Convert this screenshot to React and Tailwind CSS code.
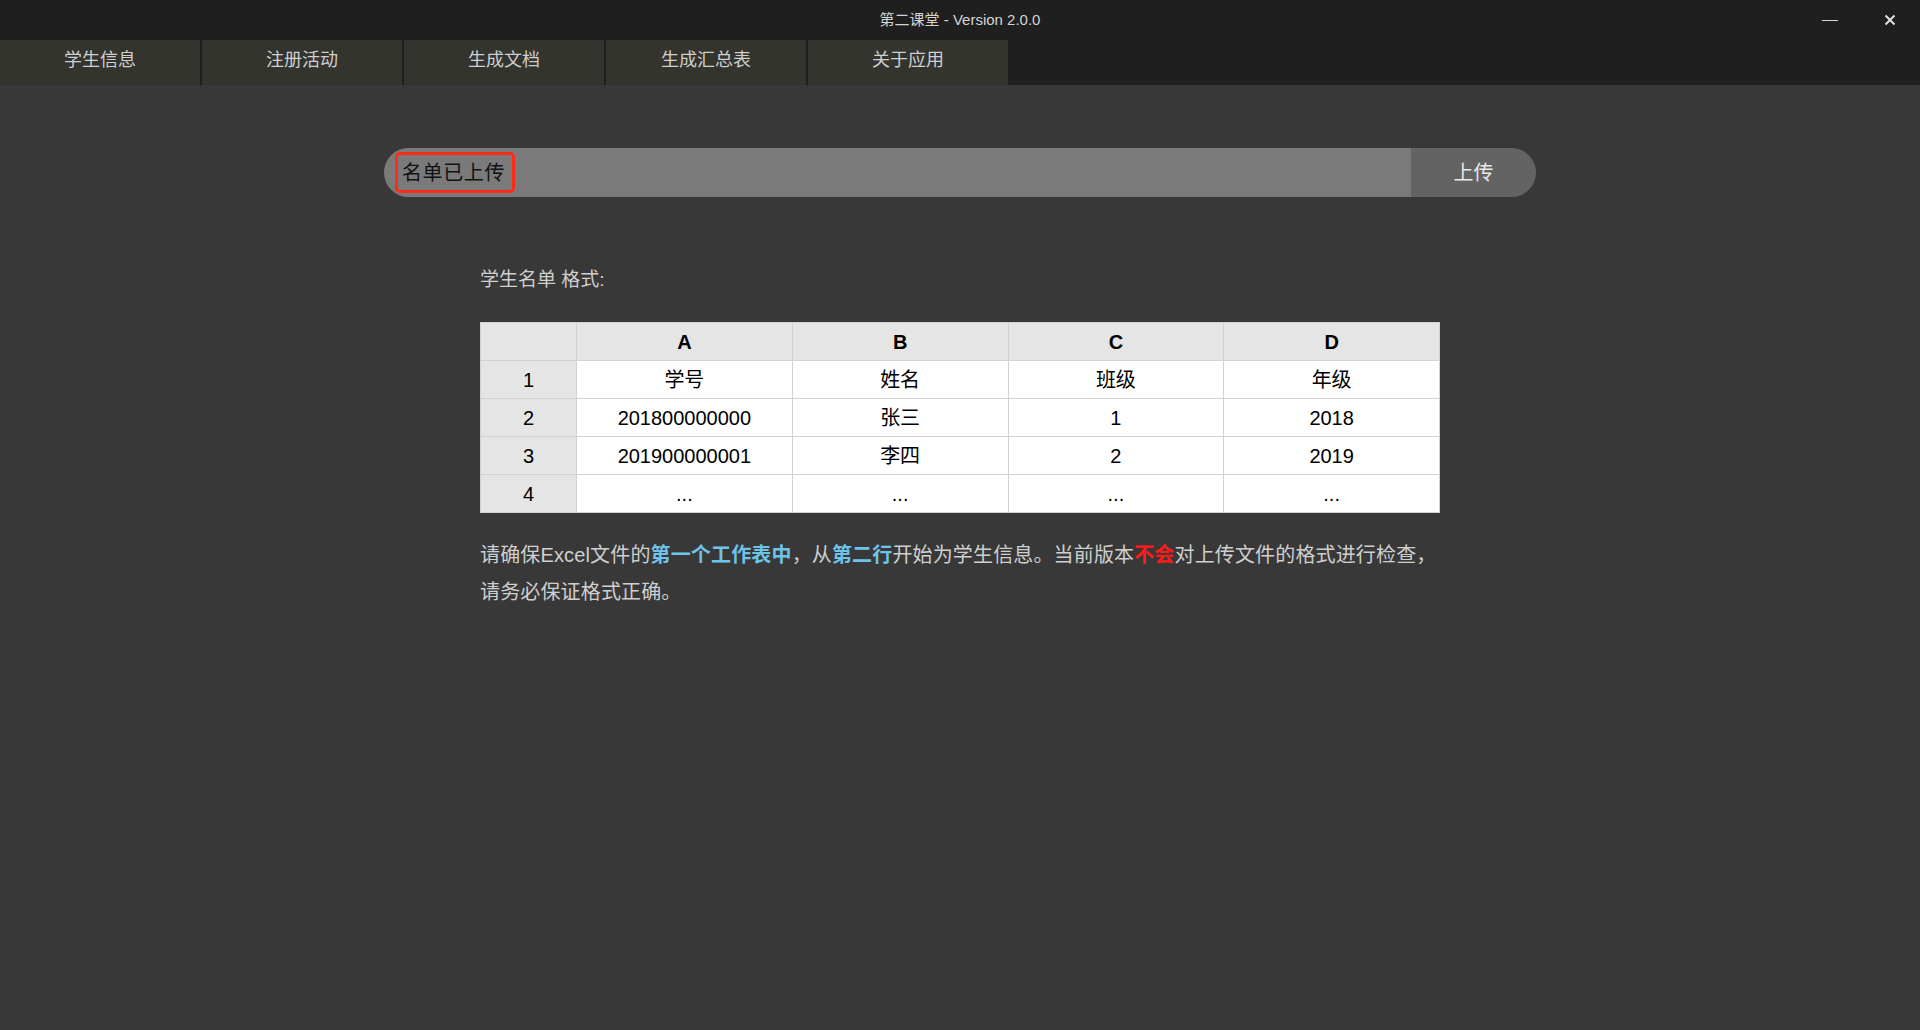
import { useState } from "react";

const FONT = { fontFamily: '"Liberation Sans", "Noto Sans CJK SC", sans-serif' };

const TABS = ["学生信息", "注册活动", "生成文档", "生成汇总表", "关于应用"];

const ROWS = [
  ["1", "学号", "姓名", "班级", "年级"],
  ["2", "201800000000", "张三", "1", "2018"],
  ["3", "201900000001", "李四", "2", "2019"],
  ["4", "...", "...", "...", "..."],
];

function TitleBar() {
  return (
    <div className="h-[40px] bg-[#1f1f1f] flex items-center text-[#d4d4d4]">
      <div className="flex-1" />
      <div className="text-[15px]">第二课堂 - Version 2.0.0</div>
      <div className="flex-1 flex justify-end items-center h-full">
        <button className="w-[60px] h-full flex items-center justify-center">
          <div className="w-[16px] h-px bg-[#d4d4d4]" />
        </button>
        <button className="w-[60px] h-full flex items-center justify-center">
          <svg width="12" height="12" viewBox="0 0 12 12">
            <path d="M1.5 1.5 L10.5 10.5 M10.5 1.5 L1.5 10.5" stroke="#e0e0e0" strokeWidth="2" />
          </svg>
        </button>
      </div>
    </div>
  );
}

function Tabs({ active, onSelect }) {
  return (
    <div className="h-[45px] bg-[#1f1f1f] flex gap-[2px]">
      {TABS.map((t, i) => (
        <button
          key={t}
          onClick={() => onSelect(i)}
          className="w-[200px] h-full pb-[4px] bg-[#33342e] text-[#cfcfcf] text-[18px] flex items-center justify-center"
        >
          {t}
        </button>
      ))}
    </div>
  );
}

function UploadBar() {
  return (
    <div className="w-[1152px] h-[49px] mx-auto flex rounded-full overflow-hidden">
      <div className="flex-1 bg-[#7a7a7a] flex items-center pl-[11px]">
        <span className="h-[41px] pl-[4px] pr-[7px] flex items-center border-[3px] border-[#ff2a1a] rounded-[5px] text-[20px] tracking-[0.6px] text-[#111]">
          名单已上传
        </span>
      </div>
      <button className="w-[125px] bg-[#636363] text-[#e8e8e8] text-[20px] flex items-center justify-center">
        上传
      </button>
    </div>
  );
}

function FormatTable() {
  return (
    <table className="w-[960px] border-collapse bg-white text-black text-[20px] table-fixed">
      <colgroup>
        <col className="w-[96px]" />
        <col />
        <col />
        <col />
        <col />
      </colgroup>
      <thead>
        <tr className="h-[38px] bg-[#e5e5e5]">
          <th className="border border-[#d2d2d2]" />
          {["A", "B", "C", "D"].map((c) => (
            <th key={c} className="border border-[#d2d2d2] font-bold">
              {c}
            </th>
          ))}
        </tr>
      </thead>
      <tbody>
        {ROWS.map((r) => (
          <tr key={r[0]} className="h-[38px]">
            {r.map((cell, i) => (
              <td
                key={i}
                className={`border border-[#d2d2d2] text-center ${i === 0 ? "bg-[#e5e5e5]" : ""}`}
              >
                {cell}
              </td>
            ))}
          </tr>
        ))}
      </tbody>
    </table>
  );
}

export default function App() {
  const [tab, setTab] = useState(0);
  return (
    <div className="w-full h-screen bg-[#383838] flex flex-col" style={FONT}>
      <TitleBar />
      <Tabs active={tab} onSelect={setTab} />
      <main className="flex-1 pt-[63px]">
        <UploadBar />
        <div className="w-[960px] mx-auto mt-[71px] text-[#cfcfcf]">
          <div className="text-[19px] leading-[24px]">学生名单 格式:</div>
          <div className="mt-[30px]">
            <FormatTable />
          </div>
          <p className="mt-[24px] text-[20px] leading-[37px] tracking-[0.15px]">
            请确保Excel文件的
            <b className="text-[#6ec3ea]">第一个工作表中</b>，从
            <b className="text-[#6ec3ea]">第二行</b>开始为学生信息。当前版本
            <b className="text-[#ff1a1a]">不会</b>对上传文件的格式进行检查，请务必保证格式正确。
          </p>
        </div>
      </main>
    </div>
  );
}
